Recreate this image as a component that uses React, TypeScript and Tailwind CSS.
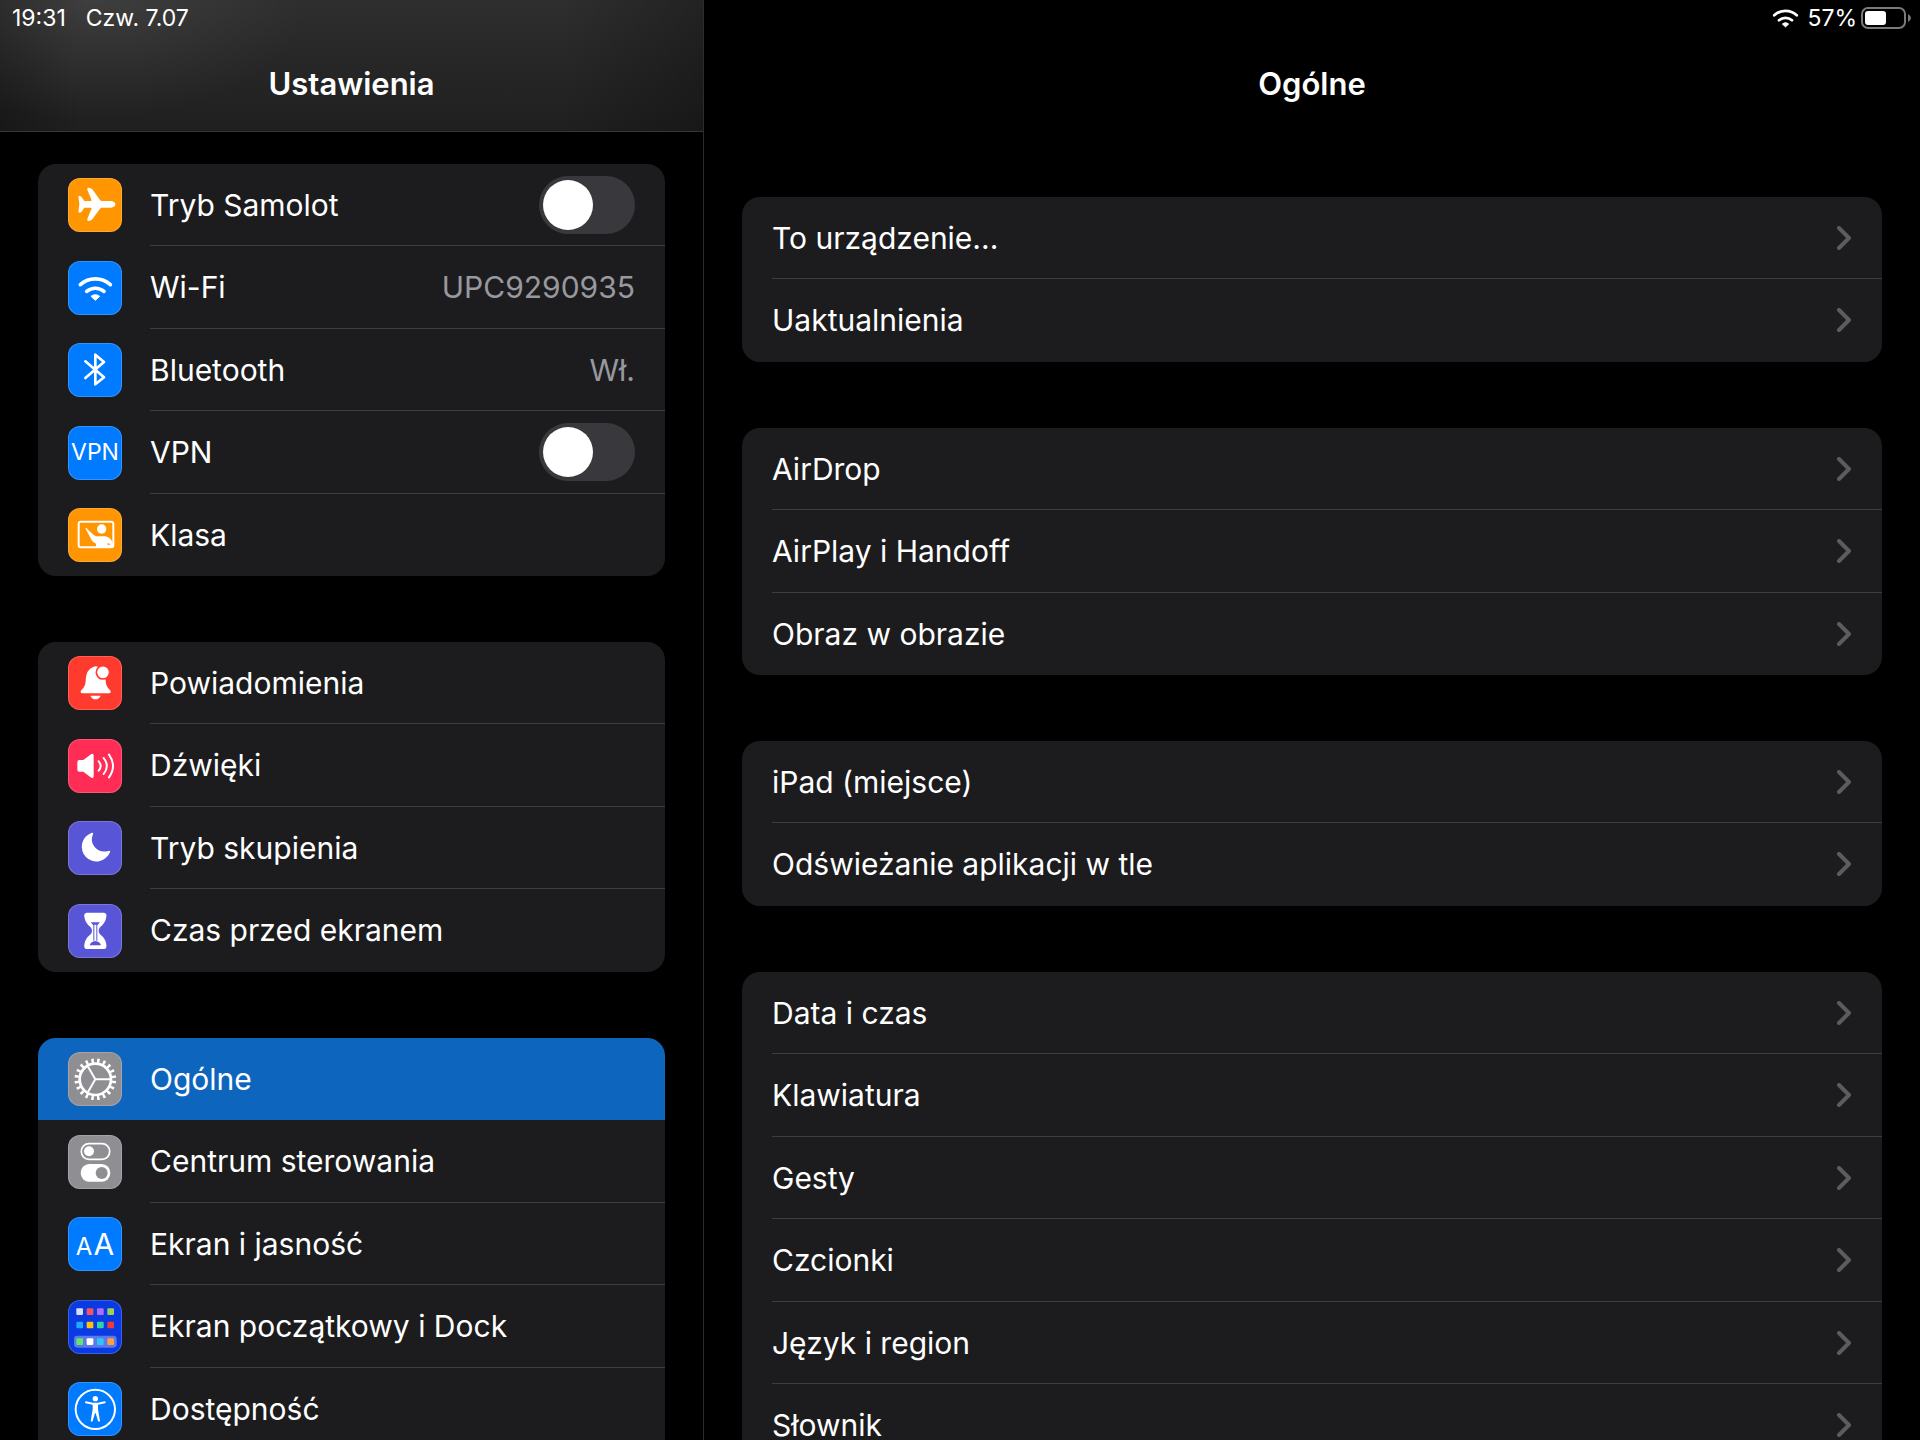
import { useState } from "react";
import type { ReactNode } from "react";
import clsx from "clsx";

// All tile glyphs are drawn on a 162x162 grid
function Glyph({ children }: { children: ReactNode }) {
  return (
    <svg viewBox="0 0 162 162" className="size-full" fill="none" aria-hidden="true">
      {children}
    </svg>
  );
}

function WifiShape() {
  return (
    <>
      <path d="M37 71A67 67 0 0 1 127 71" stroke="#fff" strokeWidth="11" strokeLinecap="round" />
      <path d="M56 91A41 41 0 0 1 108 91" stroke="#fff" strokeWidth="11" strokeLinecap="round" />
      <path d="M82 118L69 106A20 20 0 0 1 95 106Z" fill="#fff" stroke="#fff" strokeWidth="3" strokeLinejoin="round" />
    </>
  );
}

const ICONS: Record<string, ReactNode> = {
  airplane: (
    <Glyph>
      <path
        d="M130 69Q142 71 142 79Q142 87 130 89H102Q98 89 96 92L73 124Q69 129 61 129Q56 128 58 123L71 91Q71 89 69 89H49L40 102Q37 105 31 103L34 79L31 55Q37 53 40 56L49 69H69Q71 69 71 67L58 35Q56 30 61 29Q69 29 73 34L96 66Q98 69 102 69Z"
        fill="#fff"
      />
    </Glyph>
  ),
  wifi: (
    <Glyph>
      <WifiShape />
    </Glyph>
  ),
  bluetooth: (
    <Glyph>
      <path d="M52 55L108 103L82 124V35L108 57L52 105" stroke="#fff" strokeWidth="8" strokeLinecap="round" strokeLinejoin="round" />
    </Glyph>
  ),
  vpn: <span className="text-[23px] leading-none">VPN</span>,
  classroom: (
    <Glyph>
      <rect x="32" y="41" width="104" height="77" rx="7" stroke="#fff" strokeWidth="6" />
      <circle cx="101" cy="63" r="14" fill="#fff" />
      <path d="M52 61Q56 59 58 63L77 81Q84 86 92 85H112Q130 88 136 110V120H84V107Q74 104 68 91Z" fill="#fff" />
      <path d="M119 105L128 109L119 112Z" fill="#ff9500" />
    </Glyph>
  ),
  bell: (
    <Glyph>
      <path
        d="M42 112Q34 109 41 101Q52 92 53 74Q54 40 76 33Q82 29 90 32Q112 40 113 74Q114 92 125 101Q132 109 124 112Z"
        fill="#fff"
      />
      <path d="M67 119H98Q93 130 82 130Q72 130 67 119Z" fill="#fff" />
      <circle cx="105" cy="49" r="20" fill="#fff" stroke="#ff3b30" strokeWidth="5" />
    </Glyph>
  ),
  sound: (
    <Glyph>
      <path d="M34 63H46L70 45Q77 42 77 50V112Q77 119 70 116L46 98H34Q28 98 28 92V69Q28 63 34 63Z" fill="#fff" />
      <path d="M92 67Q104 81 92 95M107 57Q126 81 107 105M123 47Q147 81 123 115" stroke="#fff" strokeWidth="6" strokeLinecap="round" />
    </Glyph>
  ),
  moon: (
    <Glyph>
      <path d="M70 36Q76 33 75 39Q66 62 80 78Q96 96 121 90Q128 88 126 94A44 44 0 1 1 70 36Z" fill="#fff" />
    </Glyph>
  ),
  hourglass: (
    <Glyph>
      <path
        d="M56 26H108Q117 27 115 38Q113 56 96 70Q92 75 92 80Q92 86 96 91Q113 104 115 122Q117 134 108 135H56Q47 134 49 122Q51 104 68 91Q72 86 72 80Q72 75 68 70Q51 56 49 38Q47 27 56 26Z"
        fill="#fff"
      />
      <path d="M68 55H96L88 64V110H85V62H79V110H76V64Z" fill="#5856d6" />
      <path d="M65 124Q69 112 82 111Q95 112 99 124Z" fill="#5856d6" />
    </Glyph>
  ),
  gear: (
    <Glyph>
      <circle cx="82" cy="82" r="56" stroke="#fff" strokeWidth="13" pathLength="240" strokeDasharray="5 7" strokeDashoffset="-3" />
      <circle cx="82" cy="82" r="47" stroke="#fff" strokeWidth="8" />
      <path d="M82 82H126M82 82L60 44M82 82L60 120" stroke="#fff" strokeWidth="6" />
    </Glyph>
  ),
  controls: (
    <Glyph>
      <rect x="40" y="26" width="85" height="47" rx="23" stroke="#fff" strokeWidth="5" />
      <circle cx="63" cy="49" r="15" fill="#fff" />
      <rect x="38" y="87" width="89" height="53" rx="26" fill="#fff" />
      <circle cx="101" cy="114" r="18" fill="#8e8e93" />
    </Glyph>
  ),
  display: (
    <span className="flex items-baseline gap-px leading-none">
      <span className="text-[24px]">A</span>
      <span className="text-[30px]">A</span>
    </span>
  ),
  home: (
    <Glyph>
      <rect x="18" y="107" width="128" height="36" rx="10" fill="#5c78ea" />
      {[
        ["#d8deea", "#f8525f", "#b26cff", "#9ecf58"],
        ["#22a9ff", "#ffc20d", "#34d2a6", "#f03a3c"],
        ["#60e66e", "#ffffff", "#2dc4ff", "#ff9f40"],
      ].map((row, y) =>
        row.map((fill, x) => <rect key={fill} x={25 + x * 31} y={[25, 65, 115][y]} width="20" height="20" rx="3" fill={fill} />)
      )}
    </Glyph>
  ),
  accessibility: (
    <Glyph>
      <circle cx="82" cy="82" r="59" stroke="#fff" strokeWidth="6" />
      <circle cx="82" cy="50" r="8" fill="#fff" />
      <path d="M54 61L74 65H90L110 61" stroke="#fff" strokeWidth="6" strokeLinecap="round" strokeLinejoin="round" />
      <path d="M74 64H90V82L96 117Q93 121 90 117L83 94H81L74 117Q71 121 68 117L74 82Z" fill="#fff" />
    </Glyph>
  ),
};

interface Item {
  label: string;
  icon: string;
  tile: string;
  value?: string;
  toggle?: boolean;
}

const SIDEBAR: Item[][] = [
  [
    { label: "Tryb Samolot", icon: "airplane", tile: "bg-[#ff9500]", toggle: true },
    { label: "Wi-Fi", icon: "wifi", tile: "bg-[#007aff]", value: "UPC9290935" },
    { label: "Bluetooth", icon: "bluetooth", tile: "bg-[#007aff]", value: "Wł." },
    { label: "VPN", icon: "vpn", tile: "bg-[#007aff]", toggle: true },
    { label: "Klasa", icon: "classroom", tile: "bg-[#ff9500]" },
  ],
  [
    { label: "Powiadomienia", icon: "bell", tile: "bg-[#ff3b30]" },
    { label: "Dźwięki", icon: "sound", tile: "bg-[#ff2d55]" },
    { label: "Tryb skupienia", icon: "moon", tile: "bg-[#5856d6]" },
    { label: "Czas przed ekranem", icon: "hourglass", tile: "bg-[#5856d6]" },
  ],
  [
    { label: "Ogólne", icon: "gear", tile: "bg-[#8e8e93]" },
    { label: "Centrum sterowania", icon: "controls", tile: "bg-[#8e8e93]" },
    { label: "Ekran i jasność", icon: "display", tile: "bg-[#007aff]" },
    { label: "Ekran początkowy i Dock", icon: "home", tile: "bg-[#0a3be2]" },
    { label: "Dostępność", icon: "accessibility", tile: "bg-[#007aff]" },
  ],
];

const GENERAL = [
  ["To urządzenie...", "Uaktualnienia"],
  ["AirDrop", "AirPlay i Handoff", "Obraz w obrazie"],
  ["iPad (miejsce)", "Odświeżanie aplikacji w tle"],
  ["Data i czas", "Klawiatura", "Gesty", "Czcionki", "Język i region", "Słownik"],
];

function Group({ open, children }: { open?: boolean; children: ReactNode }) {
  return (
    <ul className={clsx("overflow-hidden bg-[#1c1c1e]", open ? "rounded-t-[18px]" : "rounded-[18px]")}>{children}</ul>
  );
}

function SidebarRow({ item, active, last, onSelect }: { item: Item; active: boolean; last: boolean; onSelect: () => void }) {
  const [on, setOn] = useState(false);
  const rowClass = clsx("flex size-full items-center pl-[30px] text-left", active && "bg-[#0e65be]");

  const content = (
    <>
      <span
        className={clsx(
          "flex size-[54px] shrink-0 items-center justify-center overflow-hidden rounded-xl inset-ring inset-ring-white/20",
          item.tile
        )}
      >
        {ICONS[item.icon]}
      </span>
      <span
        className={clsx(
          "ml-7 flex h-full min-w-0 flex-1 items-center justify-between border-b pr-[30px]",
          last || active ? "border-transparent" : "border-[#3d3d40]"
        )}
      >
        <span className="truncate">{item.label}</span>
        {item.value && <span className="text-[#98989f]">{item.value}</span>}
        {item.toggle && (
          <input
            type="checkbox"
            role="switch"
            checked={on}
            onChange={(e) => setOn(e.target.checked)}
            className="h-[58px] w-24 cursor-pointer appearance-none rounded-full bg-[#39393d] p-1 transition-colors before:block before:size-[50px] before:rounded-full before:bg-white before:transition-transform checked:bg-[#30d158] checked:before:translate-x-[38px]"
          />
        )}
      </span>
    </>
  );

  return (
    <li className="h-[82px] even:h-[83px]">
      {item.toggle ? (
        <label className={rowClass}>{content}</label>
      ) : (
        <button type="button" onClick={onSelect} className={rowClass}>
          {content}
        </button>
      )}
    </li>
  );
}

function DetailRow({ label, last }: { label: string; last: boolean }) {
  return (
    <li className="h-[82px] pl-[30px] even:h-[83px]">
      <button
        type="button"
        className={clsx(
          "flex size-full items-center justify-between border-b pr-[30px] text-left",
          last ? "border-transparent" : "border-[#3d3d40]"
        )}
      >
        <span>{label}</span>
        <svg viewBox="0 0 16 24" className="h-6 w-4" fill="none" aria-hidden="true">
          <path d="M3 2L13 12L3 22" stroke="#5c5c60" strokeWidth="4" strokeLinecap="round" strokeLinejoin="round" />
        </svg>
      </button>
    </li>
  );
}

export default function App() {
  const [selected, setSelected] = useState("Ogólne");

  return (
    <div className="grid h-screen grid-cols-[11fr_19fr] overflow-hidden bg-black font-['Inter',sans-serif] text-[30px] leading-10 text-white">
      <aside className="min-w-0 overflow-hidden border-r border-[#2c2c2e]">
        <header className="h-[132px] border-b border-[#363638] bg-[radial-gradient(ellipse_220px_120px_at_90px_0px,#ffffff14,transparent),linear-gradient(90deg,#00000040,transparent_12%,transparent_80%,#00000040),linear-gradient(180deg,#2e2e2e,#1f1f1f)]">
          <div className="flex h-9 items-center gap-5 px-3 text-[23px]">
            <span>19:31</span>
            <span>Czw. 7.07</span>
          </div>
          <h1 className="flex h-24 items-center justify-center text-[31px] font-semibold">Ustawienia</h1>
        </header>
        <nav className="flex flex-col gap-[66px] px-[38px] pt-8">
          {SIDEBAR.map((group, g) => (
            <Group key={g} open={g === SIDEBAR.length - 1}>
              {group.map((item, i) => (
                <SidebarRow
                  key={item.label}
                  item={item}
                  active={selected === item.label}
                  last={i === group.length - 1}
                  onSelect={() => setSelected(item.label)}
                />
              ))}
            </Group>
          ))}
        </nav>
      </aside>

      <main className="min-w-0 overflow-hidden">
        <header className="h-[132px]">
          <div className="flex h-9 items-center justify-end pr-2 text-[23px]">
            <svg viewBox="28 42 108 80" className="mr-2 h-5 w-[27px]" fill="none" aria-hidden="true">
              <WifiShape />
            </svg>
            <span className="mr-1">57%</span>
            <svg viewBox="0 0 51 24" className="h-6 w-[51px]" fill="none" aria-hidden="true">
              <rect x="1" y="2" width="43" height="20" rx="6" stroke="#7a7a7a" strokeWidth="2" />
              <rect x="4" y="5" width="21" height="14" rx="3" fill="#fff" />
              <path d="M47 8Q50 10 50 12Q50 14 47 16Z" fill="#7a7a7a" />
            </svg>
          </div>
          <h2 className="flex h-24 items-center justify-center text-[31px] font-semibold">{selected}</h2>
        </header>
        <div className="flex flex-col gap-[66px] px-[38px] pt-[65px]">
          {GENERAL.map((group, g) => (
            <Group key={g} open={g === GENERAL.length - 1}>
              {group.map((label, i) => (
                <DetailRow key={label} label={label} last={i === group.length - 1} />
              ))}
            </Group>
          ))}
        </div>
      </main>
    </div>
  );
}
